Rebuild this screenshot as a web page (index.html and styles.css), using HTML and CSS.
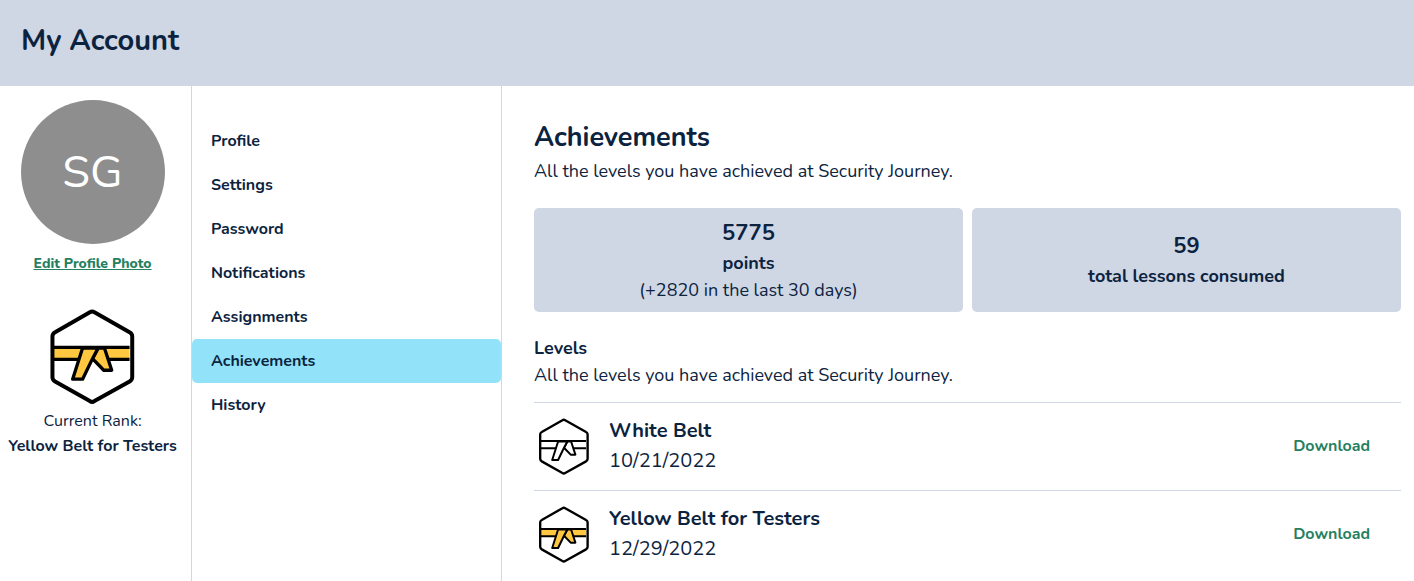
FILE: index.html
```html
<!DOCTYPE html>
<html lang="en">
<head>
<meta charset="utf-8">
<meta name="viewport" content="width=device-width, initial-scale=1">
<title>My Account</title>
<link rel="stylesheet" href="styles.css">
</head>
<body>
<svg class="sprite" aria-hidden="true">
  <symbol id="belt" viewBox="34 26 254 287">
    <path class="band" d="M44 142H273V178H44Z"/>
    <path class="line" d="M44 142H273M44 178H273"/>
    <path class="tail" d="M178 144L197 144L219 211L195 211L161 176Z"/>
    <path class="tail" d="M131 144H178L161 176L131 238H101Z"/>
    <path class="hexagon" d="M153 36Q160 31 167 36L273 96Q281 100 281 109V232Q281 240 273 245L167 304Q160 309 153 304L48 245Q40 240 40 232V109Q40 100 48 96Z"/>
  </symbol>
</svg>
<header class="page-header"><h1 class="page-title">My Account</h1></header>
<div class="account">
  <aside class="summary">
    <div class="avatar">SG</div>
    <a class="edit-photo" href="#photo">Edit Profile Photo</a>
    <svg class="rank-icon yellow" role="img" aria-label="Yellow belt"><use href="#belt"/></svg>
    <p class="rank-label">Current Rank:</p>
    <p class="rank-name">Yellow Belt for Testers</p>
  </aside>
  <nav class="menu" aria-label="Account">
    <a class="menu-item" href="#profile">Profile</a>
    <a class="menu-item" href="#settings">Settings</a>
    <a class="menu-item" href="#password">Password</a>
    <a class="menu-item" href="#notifications">Notifications</a>
    <a class="menu-item" href="#assignments">Assignments</a>
    <a class="menu-item active" href="#achievements" aria-current="page">Achievements</a>
    <a class="menu-item" href="#history">History</a>
  </nav>
  <main class="content">
    <h2 class="section-title">Achievements</h2>
    <p class="text">All the levels you have achieved at Security Journey.</p>
    <div class="stats">
      <section class="stat">
        <p class="stat-value">5775</p>
        <p class="stat-label">points</p>
        <p class="text">(+2820 in the last 30 days)</p>
      </section>
      <section class="stat">
        <p class="stat-value">59</p>
        <p class="stat-label">total lessons consumed</p>
      </section>
    </div>
    <h3 class="levels-title">Levels</h3>
    <p class="text">All the levels you have achieved at Security Journey.</p>
    <ul class="levels">
      <li class="level">
        <svg class="level-icon white" role="img" aria-label="White belt"><use href="#belt"/></svg>
        <div class="level-info">
          <p class="level-name">White Belt</p>
          <p class="level-date">10/21/2022</p>
        </div>
        <a class="download" href="#white-belt">Download</a>
      </li>
      <li class="level">
        <svg class="level-icon yellow" role="img" aria-label="Yellow belt"><use href="#belt"/></svg>
        <div class="level-info">
          <p class="level-name">Yellow Belt for Testers</p>
          <p class="level-date">12/29/2022</p>
        </div>
        <a class="download" href="#yellow-belt">Download</a>
      </li>
    </ul>
  </main>
</div>
</body>
</html>
```
FILE: styles.css
```css
* { box-sizing: border-box; }
html, body { margin: 0; }
body {
  min-height: 100vh;
  display: flex;
  flex-direction: column;
  background: #fff;
  color: #0c2340;
  font-family: Nunito, Lato, "Open Sans", sans-serif;
  font-size: 18px;
  line-height: 27px;
}
h1, h2, h3, p, ul { margin: 0; padding: 0; }
.sprite { position: absolute; width: 0; height: 0; }

.page-header { padding: 21px 21px 24px; background: #cfd6e4; border-bottom: 1px solid #d2d6df; }
.page-title { font-size: 29px; line-height: 40px; }

.account { flex: 1; display: grid; grid-template-columns: 192px 310px 1fr; }

.summary {
  display: flex;
  flex-direction: column;
  align-items: center;
  padding: 14px 12px 0 6px;
  border-right: 1px solid #cfd6e4;
  font-size: 16px;
  line-height: 25px;
}
.avatar {
  display: flex;
  align-items: center;
  justify-content: center;
  width: 144px;
  height: 144px;
  border-radius: 50%;
  background: #8e8e8e;
  color: #fff;
  font-size: 45px;
}
.edit-photo { margin: 7px 0 33px; color: #26805f; font-size: 14px; font-weight: 800; }
.rank-icon { width: 85px; height: 95px; margin-bottom: 5px; }
.rank-name { font-weight: 700; white-space: nowrap; }

.band { fill: var(--belt); }
.line { fill: none; stroke: #000; stroke-width: 10; }
.tail { fill: var(--belt); stroke: #000; stroke-width: 10; stroke-linejoin: round; }
.hexagon { fill: none; stroke: #000; stroke-width: 12; stroke-linejoin: round; }
.yellow { --belt: #ffc840; }
.white { --belt: #fff; }

.menu { padding-top: 33px; border-right: 1px solid #cfd6e4; }
.menu-item {
  display: block;
  padding: 10px 19px;
  border-radius: 5px;
  color: inherit;
  font-size: 16px;
  font-weight: 700;
  line-height: 24px;
  text-decoration: none;
}
.menu-item.active { background: #92e3f9; }

.content { padding: 31px 13px 0 32px; }
.section-title { font-size: 27px; line-height: 41px; }
.stats { display: grid; grid-template-columns: 1fr 1fr; gap: 9px; margin: 23px 0; }
.stat {
  display: flex;
  flex-direction: column;
  justify-content: center;
  min-height: 104px;
  padding: 8px;
  border-radius: 5px;
  background: #cfd6e4;
  text-align: center;
}
.stat-value { font-size: 22px; font-weight: 700; line-height: 33px; }
.stat-label { font-weight: 700; }
.levels-title { font-size: 18px; }
.levels { margin-top: 13px; list-style: none; }
.level {
  display: flex;
  align-items: center;
  padding: 13px 31px 14px 5px;
  border-top: 1px solid #cfd6e4;
}
.level-icon { width: 50px; height: 57px; margin-right: 20px; }
.level-info { flex: 1; font-size: 20px; line-height: 30px; }
.level-name { font-weight: 700; }
.download { color: #26805f; font-size: 16px; font-weight: 700; text-decoration: none; }
```
